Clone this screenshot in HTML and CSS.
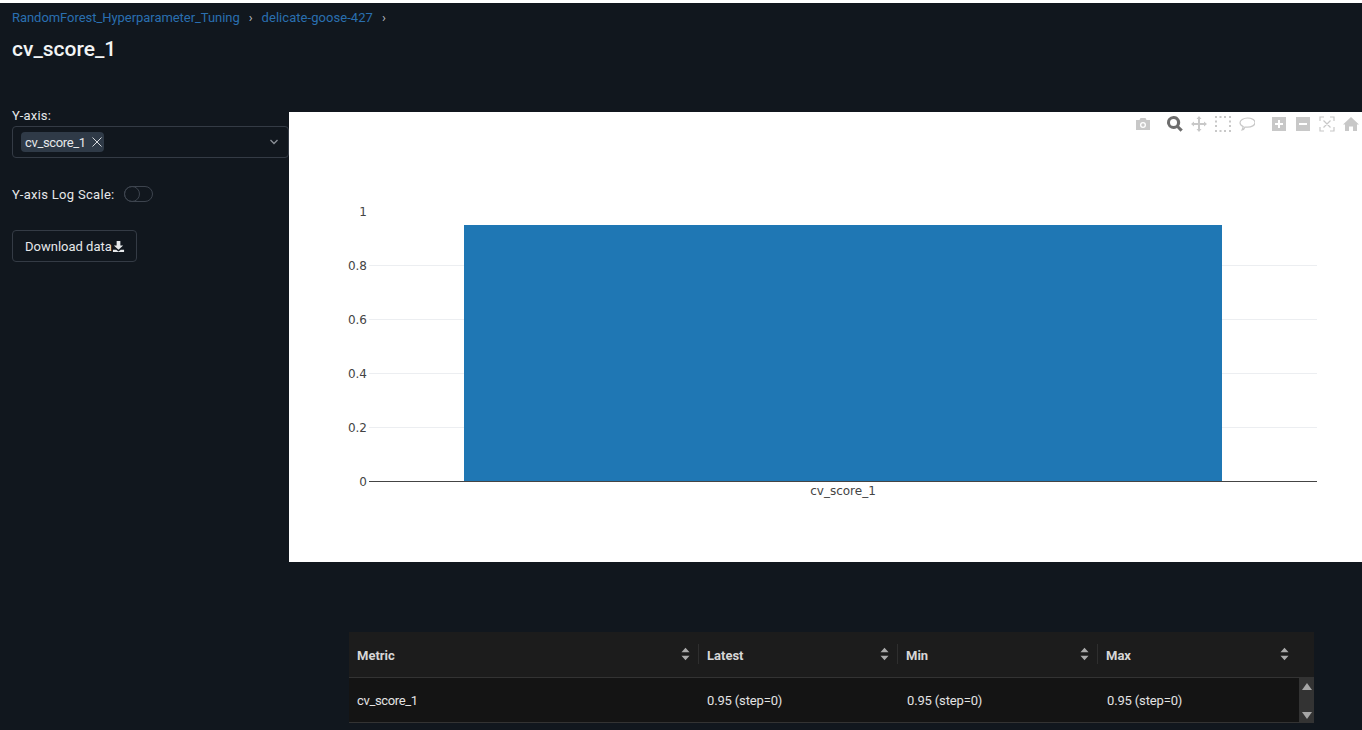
FILE: index.html
```html
<!DOCTYPE html>
<html lang="en">
<head>
    <meta charset="UTF-8">
    <meta name="viewport" content="width=device-width, initial-scale=1.0">
    <title>cv_score_1</title>
    <link rel="stylesheet" href="styles.css">
</head>
<body>
    <div class="page">
        <nav class="crumbs">
            <a href="#">RandomForest_Hyperparameter_Tuning</a>
            <span class="sep">›</span>
            <a class="run" href="#">delicate-goose-427</a>
            <span class="sep">›</span>
        </nav>
        <h1 class="title">cv_score_1</h1>

        <div class="main">
            <aside class="side">
                <label class="field-label">Y-axis:</label>
                <div class="select">
                    <span class="pill"><span class="metric">cv_score_1</span>
                        <svg class="pill-x" viewBox="0 0 10 10"><path d="M0.500 0.500l9 9M9.500 0.500l-9 9"/></svg>
                    </span>
                    <svg class="chev" viewBox="0 0 10 6"><path d="M1.500 1l3.500 3.500L8.500 1"/></svg>
                </div>
                <div class="log-row">
                    <span class="log-label">Y-axis Log Scale:</span>
                    <span class="switch"><span class="knob"></span></span>
                </div>
                <button class="btn">Download data<svg class="dl" viewBox="0 0 14 14"><path d="M5 1h4v5h3L7 10.500 2 6h3z"/><path d="M1 10.500h3.500L7 12.500l2.500-2H13V13H1z"/></svg></button>
            </aside>

            <div class="chart">
                <svg class="plot" viewBox="0 0 1073 450">
                    <g class="grid">
                        <path d="M80 153.500H1028M80 207.500H1028M80 261.500H1028M80 315.500H1028"/>
                    </g>
                    <rect class="bar" x="175" y="113" width="758" height="257"/>
                    <path class="axis" d="M80 369.500H1028"/>
                    <g class="labels">
                        <text x="78" y="104" text-anchor="end">1</text>
                        <text x="78" y="158" text-anchor="end">0.8</text>
                        <text x="78" y="212" text-anchor="end">0.6</text>
                        <text x="78" y="266" text-anchor="end">0.4</text>
                        <text x="78" y="320" text-anchor="end">0.2</text>
                        <text x="78" y="374" text-anchor="end">0</text>
                        <text x="554" y="383" text-anchor="middle">cv_score_1</text>
                    </g>
                </svg>
                <div class="modebar">
                    <svg class="mb" viewBox="0 0 16 16"><path d="M1 4h3.500l1-2h5l1 2H15v10H1zM8 6a3 3 0 1 0 0 6 3 3 0 0 0 0-6z" fill-rule="evenodd"/><circle cx="8" cy="9" r="1.700"/></svg>
                    <svg class="mb on gap1" viewBox="0 0 16 16"><path d="M6.500 0a6.500 6.500 0 1 0 3.500 12l3.500 3.800 2.300-2.300-3.700-3.500A6.500 6.500 0 0 0 6.500 0zm0 3a3.500 3.500 0 1 1 0 7 3.500 3.500 0 0 1 0-7z" fill-rule="evenodd"/></svg>
                    <svg class="mb" viewBox="0 0 16 16"><path d="M8 0l2.500 3H9v4h4V5.500L16 8l-3 2.500V9H9v4h1.500L8 16l-2.500-3H7V9H3v1.500L0 8l3-2.500V7h4V3H5.500z"/></svg>
                    <svg class="mb" viewBox="0 0 16 16"><path d="M0 0h2v2H0zM4.500 0h2v2h-2zM9 0h2v2H9zM14 0h2v2h-2zM14 4.500h2v2h-2zM14 9h2v2h-2zM14 14h2v2h-2zM9 14h2v2H9zM4.500 14h2v2h-2zM0 14h2v2H0zM0 9h2v2H0zM0 4.500h2v2H0z"/></svg>
                    <svg class="mb" viewBox="0 0 16 16"><path class="line" d="M8.500 2C4.400 2 1 4.200 1 6.800c0 1.700 1.300 3 3.200 3.800-.3 1-.6 2.500-1.200 3.400 1.600-.2 2.500-1.500 3-3 .8.100 1.600.2 2.500.2 4.100 0 7.500-2 7.500-4.600S12.600 2 8.500 2z"/></svg>
                    <svg class="mb gap2" viewBox="0 0 16 16"><path d="M1 1h14v14H1zM7 4v3H4v2h3v3h2V9h3V7H9V4z" fill-rule="evenodd"/></svg>
                    <svg class="mb" viewBox="0 0 16 16"><path d="M1 1h14v14H1zM4 7v2h8V7z" fill-rule="evenodd"/></svg>
                    <svg class="mb" viewBox="0 0 16 16"><path class="line" d="M1 5V1h4M11 1h4v4M15 11v4h-4M5 15H1v-4M4.500 4.500l7 7M11.500 4.500l-7 7"/></svg>
                    <svg class="mb" viewBox="0 0 16 16"><path d="M8 1l8 7.500h-2V15h-4v-4.500H6V15H2V8.500H0z"/></svg>
                </div>
            </div>
        </div>

        <div class="table">
            <div class="row head">
                <div class="cell">Metric<svg class="sort" viewBox="0 0 10 14"><path d="M5 0l4.500 5H.5zM5 14L.5 9h9z"/></svg></div>
                <div class="cell">Latest<svg class="sort" viewBox="0 0 10 14"><path d="M5 0l4.500 5H.5zM5 14L.5 9h9z"/></svg></div>
                <div class="cell">Min<svg class="sort" viewBox="0 0 10 14"><path d="M5 0l4.500 5H.5zM5 14L.5 9h9z"/></svg></div>
                <div class="cell last">Max<svg class="sort" viewBox="0 0 10 14"><path d="M5 0l4.500 5H.5zM5 14L.5 9h9z"/></svg></div>
            </div>
            <div class="body-wrap">
                <div class="row data">
                    <div class="cell metric">cv_score_1</div>
                    <div class="cell">0.95 (step=0)</div>
                    <div class="cell">0.95 (step=0)</div>
                    <div class="cell">0.95 (step=0)</div>
                </div>
                <div class="scroll">
                    <svg viewBox="0 0 10 7"><path d="M5 0l5 7H0z"/></svg>
                    <svg viewBox="0 0 10 7"><path d="M5 7L0 0h10z"/></svg>
                </div>
            </div>
        </div>
    </div>
</body>
</html>
```

FILE: styles.css
```css
html, body {
    margin: 0;
    background: #fff;
}
.page {
    margin-top: 3px;
    height: 727px;
    overflow: hidden;
    box-sizing: border-box;
    background: #11171e;
    color: #e6e8ea;
    font-family: Roboto, "Open Sans", sans-serif;
    font-size: 13px;
}
.crumbs {
    display: flex;
    align-items: center;
    gap: 9px;
    padding: 5px 12px 0;
    height: 20px;
    line-height: 20px;
}
.crumbs a {
    color: #2a6fb0;
    text-decoration: none;
    letter-spacing: -0.05px;
}
.crumbs a.run {
    letter-spacing: 0.05px;
}
.crumbs .sep {
    color: #b8bcc2;
}
.title {
    margin: 6px 12px 0;
    font-size: 21px;
    line-height: 30px;
    font-weight: 500;
    color: #f2f4f5;
}
.main {
    display: flex;
    margin-top: 48px;
    height: 450px;
}
.side {
    width: 289px;
    flex: none;
    box-sizing: border-box;
    padding-left: 12px;
    margin-top: -5px;
}
.field-label {
    display: block;
    line-height: 18px;
    letter-spacing: 0.2px;
}
.select {
    display: flex;
    align-items: center;
    justify-content: space-between;
    box-sizing: border-box;
    height: 32px;
    margin-top: 1px;
    padding: 0 9px 0 8px;
    border: 1px solid #343b45;
    border-radius: 4px;
}
.pill {
    display: flex;
    align-items: center;
    gap: 6px;
    height: 20px;
    padding: 0 2px 0 4px;
    border-radius: 4px;
    background: #2f3a47;
}
.metric {
    letter-spacing: -0.35px;
}
.pill-x {
    width: 10px;
    height: 10px;
    fill: none;
    stroke: #d5d8dc;
    stroke-width: 1;
}
.chev {
    width: 10px;
    height: 6px;
    fill: none;
    stroke: #8b9098;
    stroke-width: 1.3;
}
.log-row {
    display: flex;
    align-items: center;
    gap: 9px;
    margin-top: 26px;
    height: 20px;
}
.log-label {
    letter-spacing: 0.3px;
}
.switch {
    position: relative;
    display: block;
    box-sizing: border-box;
    width: 29px;
    height: 16px;
    border: 1px solid #3d444e;
    border-radius: 8px;
}
.knob {
    position: absolute;
    left: -1px;
    top: -1px;
    box-sizing: border-box;
    width: 16px;
    height: 16px;
    border: 1px solid #3d444e;
    border-radius: 50%;
}
.btn {
    display: flex;
    align-items: center;
    box-sizing: border-box;
    height: 32px;
    margin-top: 26px;
    padding: 0 11px 0 12px;
    background: none;
    border: 1px solid #343b45;
    border-radius: 4px;
    color: #e6e8ea;
    font: inherit;
}
.dl {
    width: 13px;
    height: 13px;
    fill: #e6e8ea;
}
.chart {
    position: relative;
    flex: 1;
    background: #fff;
}
.plot {
    display: block;
    width: 1073px;
    height: 450px;
}
.grid path {
    fill: none;
    stroke: #eceef1;
    stroke-width: 1;
}
.bar {
    fill: #1f77b4;
}
.axis {
    fill: none;
    stroke: #444;
    stroke-width: 1;
}
.labels text {
    font-family: "DejaVu Sans", Verdana, sans-serif;
    font-size: 12px;
    fill: #444;
}
.modebar {
    position: absolute;
    top: 4px;
    right: 3px;
    display: flex;
    align-items: center;
    gap: 8px;
}
.mb {
    width: 16px;
    height: 16px;
    fill: #c8c8c8;
}
.mb .line {
    fill: none;
    stroke: #c8c8c8;
    stroke-width: 1.2;
}
.mb.on {
    fill: #6d6d6d;
}
.mb.gap1 {
    margin-left: 8px;
}
.mb.gap2 {
    margin-left: 8px;
}
.table {
    margin: 70px 48px 0 349px;
}
.row {
    display: grid;
    grid-template-columns: 349px 199px 200px 1fr;
}
.head {
    height: 46px;
    background: #1c1c1c;
    border-bottom: 1px solid #333;
    box-sizing: border-box;
    font-weight: 700;
    color: #d6d6d6;
}
.head .cell {
    position: relative;
    display: flex;
    align-items: center;
    justify-content: space-between;
    padding: 1px 8px 0 9px;
}
.head .cell::before {
    content: "";
    position: absolute;
    left: 0;
    top: 12px;
    height: 20px;
    border-left: 1px solid #2e2e2e;
}
.head .cell:first-child::before {
    display: none;
}
.head .cell:first-child {
    padding-left: 8px;
}
.head .cell.last {
    padding-right: 25px;
}
.sort {
    width: 9px;
    height: 14px;
    margin-top: -3px;
    fill: #a9a9a9;
}
.body-wrap {
    display: flex;
    height: 45px;
    background: #141414;
    border-bottom: 1px solid #333;
    box-sizing: border-box;
}
.data {
    flex: 1;
    align-items: center;
    grid-template-columns: 350px 200px 200px 1fr;
    color: #e3e3e3;
    letter-spacing: -0.15px;
}
.data .cell {
    padding-left: 8px;
}
.data .metric {
    letter-spacing: -0.35px;
}
.scroll {
    display: flex;
    flex-direction: column;
    justify-content: space-between;
    align-items: center;
    box-sizing: border-box;
    width: 15px;
    padding: 5px 0 3px;
    background: #333;
}
.scroll svg {
    width: 10px;
    height: 7px;
    fill: #a5a5a5;
}
```
